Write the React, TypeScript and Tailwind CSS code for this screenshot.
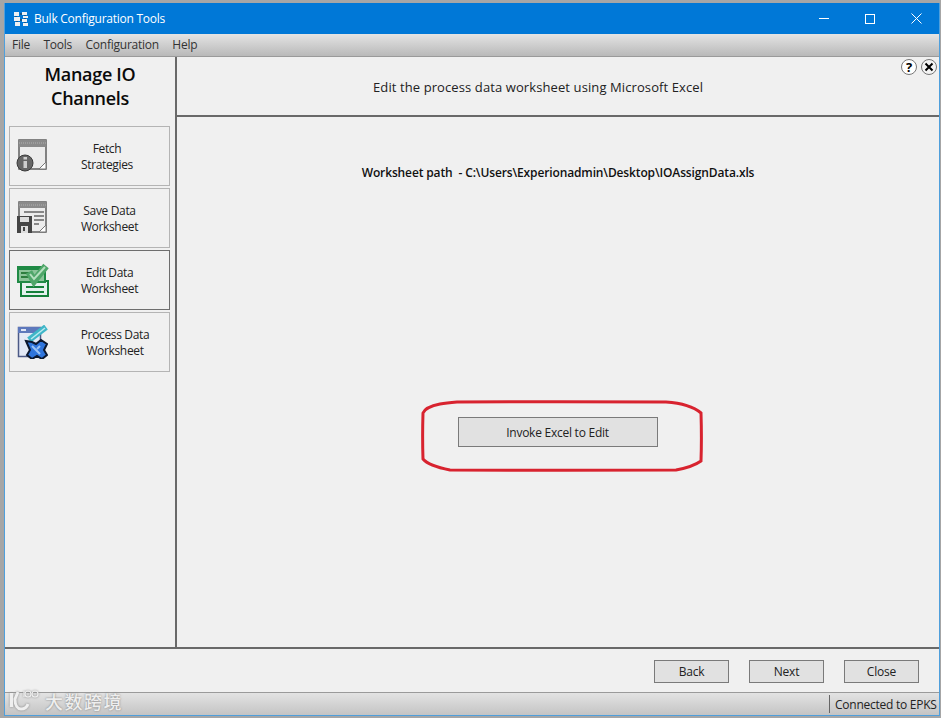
const font = { fontFamily: '"Open Sans", "Noto Sans", sans-serif' };

function FetchIcon() {
  return (
    <svg width="32" height="34" viewBox="0 0 32 34" className="shrink-0">
      <rect x="3" y="1" width="27" height="29" fill="#ececec" stroke="#5e5e5e" strokeWidth="1.5" />
      <rect x="3" y="1" width="27" height="7" fill="#8a8a8a" />
      <path d="M3 4h27" stroke="#b0b0b0" strokeWidth="1" strokeDasharray="1 1" />
      <path d="M23 30l7-7v7z" fill="#fff" stroke="#777" />
      <circle cx="9" cy="24" r="8" fill="#666" stroke="#3a3a3a" />
      <rect x="7.5" y="22" width="3.5" height="7" fill="#cfcfcf" />
      <rect x="7.5" y="18" width="3.5" height="2.5" fill="#cfcfcf" />
    </svg>
  );
}

function SaveIcon() {
  return (
    <svg width="32" height="34" viewBox="0 0 32 34" className="shrink-0">
      <rect x="3" y="1" width="27" height="30" fill="#ececec" stroke="#5e5e5e" strokeWidth="1.5" />
      <rect x="3" y="1" width="27" height="6" fill="#8a8a8a" />
      <path d="M3 4h27" stroke="#b0b0b0" strokeWidth="1" strokeDasharray="1 1" />
      <path d="M8 11h20M18 15h10M18 19h10M18 23h5" stroke="#666" strokeWidth="1.5" />
      <path d="M23 31l7-7v7z" fill="#fff" stroke="#777" />
      <rect x="1" y="15" width="15" height="17" fill="#444" />
      <rect x="4" y="16" width="9" height="5" fill="#ddd" />
      <rect x="5" y="25" width="7" height="7" fill="#ddd" />
      <rect x="7" y="26" width="2" height="4" fill="#444" />
    </svg>
  );
}

function EditIcon() {
  return (
    <svg width="33" height="34" viewBox="0 0 33 34" className="shrink-0 mr-[-1px]">
      <rect x="5" y="18" width="27" height="15" fill="#e4f1ee" stroke="#15803a" strokeWidth="2" />
      <path d="M10 24h18M10 29h18" stroke="#15803a" strokeWidth="2" />
      <rect x="1" y="3" width="29" height="17" fill="#1f8a45" />
      <rect x="3" y="7" width="25" height="11" fill="#8cc49a" />
      <path d="M5 10h8M5 14h8" stroke="#2e7d3f" strokeWidth="2" />
      <path d="M13 9l5 9L30 3" fill="none" stroke="#4fa669" strokeWidth="7" />
      <path d="M14 11l4 5L29 4" fill="none" stroke="#b5e0bf" strokeWidth="2" />
    </svg>
  );
}

function ProcessIcon() {
  return (
    <svg width="32" height="34" viewBox="0 0 32 34" className="shrink-0">
      <rect x="2.5" y="2.5" width="22" height="29" fill="#e3e9f6" stroke="#4c5a86" strokeWidth="1.5" />
      <rect x="2" y="2" width="23" height="6" fill="#5d78bc" />
      <rect x="5" y="4" width="5" height="2" fill="#dfe6f5" />
      <path d="M13 15L30 2" stroke="#3fb6c8" strokeWidth="6" />
      <path d="M15 14L29 3" stroke="#bdeaf0" strokeWidth="1.5" />
      <path d="M10 16l6 1 4 2 5-4 6 4-3 6 3 5-5 4-5-3-5 3-5-4 3-5z" fill="#2f75dc" stroke="#0b1830" strokeWidth="2" />
      <path d="M16 21l8 8M24 21l-3 3" stroke="#9cc4f5" strokeWidth="2" />
    </svg>
  );
}

function SideButton({ icon, lines, active, textClass }: { icon: React.ReactNode; lines: string[]; active?: boolean; textClass: string }) {
  return (
    <div className={`flex items-center pl-[6px] w-[161px] h-[60px] border ${active ? "border-[#6e6e6e]" : "border-[#b4b4b4]"} bg-[#f0f0f0]`}>
      {icon}
      <div className={`pt-[2px] text-[12px] leading-[16px] text-center text-[#222] tracking-[-0.35px] whitespace-nowrap ${textClass}`}>
        {lines.map((l) => <div key={l}>{l}</div>)}
      </div>
    </div>
  );
}

function BottomButton({ label, className }: { label: string; className?: string }) {
  return (
    <div className={`w-[75px] h-[23px] border border-[#7a7a7a] bg-[#e1e1e1] flex items-center justify-center pt-[1px] text-[12px] tracking-[-0.2px] text-[#222] ${className ?? ""}`}>{label}</div>
  );
}

export default function App() {
  return (
    <div style={font} className="relative w-[941px] h-[718px] bg-[#a6a6a6] pt-[3px] pl-[4px] pr-[1px] pb-[2px] overflow-hidden">
      <div className="w-full h-full flex flex-col border-x border-b border-[#4f9fdc] bg-[#f0f0f0]">
        <div className="h-[31px] shrink-0 bg-[#0078d7] flex items-center text-white">
          <svg width="16" height="16" viewBox="0 0 16 16" className="ml-[8px] mr-[5px]">
            <path d="M1 1h5v4H1zM1 6h6v4H1zM2 11h5v4H2zM9 1h5v3H9zM10 5h5v2h-5zM9 8h5v3H9zM10 12h5v3h-5z" fill="#eef1f3" />
            <path d="M3 5v1M4 10v1M7 3h2M7 9h2M12 4v1M12 7v1M12 11v1" stroke="#2b3640" strokeWidth="1" />
          </svg>
          <span className="text-[12px] tracking-[-0.25px]">Bulk Configuration Tools</span>
          <div className="ml-auto flex items-center">
            <div className="w-[46px] flex justify-center"><div className="w-[10px] h-px bg-white" /></div>
            <div className="w-[46px] flex justify-center"><div className="w-[10px] h-[10px] border border-white" /></div>
            <div className="w-[46px] flex justify-center">
              <svg width="11" height="11" viewBox="0 0 11 11"><path d="M.5.5l10 10M10.5.5l-10 10" stroke="#fff" /></svg>
            </div>
          </div>
        </div>
        <div className="h-[23px] shrink-0 bg-gradient-to-b from-[#e4e4e4] to-[#b9b9b9] border-b border-[#9a9a9a] flex items-center gap-[13.5px] pl-[7px] text-[12px] text-[#333] tracking-[-0.25px]">
          <span>File</span><span>Tools</span><span>Configuration</span><span>Help</span>
        </div>
        <div className="flex-1 flex min-h-0">
          <div className="w-[172px] shrink-0 border-r-2 border-[#696969] flex flex-col">
            <div className="h-[69px] shrink-0 pt-[5px] text-center text-[18px] leading-[24px] font-semibold text-[#0a0a0a] tracking-[-0.3px]">
              <div>Manage IO</div>
              <div>Channels</div>
            </div>
            <div className="flex flex-col gap-[2px] pl-[4px]">
              <SideButton icon={<FetchIcon />} lines={["Fetch", "Strategies"]} textClass="ml-[26px] w-[66px]" />
              <SideButton icon={<SaveIcon />} lines={["Save Data", "Worksheet"]} textClass="ml-[26px] w-[71px]" />
              <SideButton icon={<EditIcon />} lines={["Edit Data", "Worksheet"]} active textClass="ml-[26px] w-[71px]" />
              <SideButton icon={<ProcessIcon />} lines={["Process Data", "Worksheet"]} textClass="ml-[26px] w-[82px]" />
            </div>
          </div>
          <div className="flex-1 flex flex-col min-w-0">
            <div className="h-[60px] shrink-0 border-b-2 border-[#696969] flex items-center pl-[196px] pt-[4px] text-[13px] text-[#222] tracking-[0.1px]">
              Edit the process data worksheet using Microsoft Excel
            </div>
            <div className="flex-1 flex flex-col items-center">
              <div className="mt-[47px] text-[12px] font-semibold text-[#111] tracking-[-0.13px] whitespace-pre">Worksheet path  - C:\Users\Experionadmin\Desktop\IOAssignData.xls</div>
              <div className="mt-[235px] ml-[-1px] w-[200px] h-[30px] border border-[#7a7a7a] bg-[#e1e1e1] flex items-center justify-center pt-[2px] text-[12px] text-[#222] tracking-[-0.25px]">Invoke Excel to Edit</div>
            </div>
          </div>
        </div>
        <div className="h-[45px] shrink-0 border-t-2 border-[#696969] flex items-center justify-end pr-[20px] gap-[20px] pt-[1px]">
          <BottomButton label="Back" />
          <BottomButton label="Next" className="mr-[-5px]" />
          <BottomButton label="Close" className="ml-[5px]" />
        </div>
        <div className="h-[23px] shrink-0 bg-gradient-to-b from-[#e3e3e3] to-[#c4c4c4] border-t border-[#9a9a9a] flex items-center justify-end">
          <div className="h-[18px] border-l border-[#666] pl-[5px] pr-[3px] pt-[1px] w-[110px] text-[12px] leading-[18px] text-[#222] tracking-[-0.25px] whitespace-nowrap">Connected to EPKS</div>
        </div>
      </div>

      {/* help / close overlays */}
      <div className="absolute left-[901px] top-[59px] w-[16px] h-[16px] rounded-full border border-[#777] bg-white flex items-center justify-center text-[13px] font-bold leading-none text-black">?</div>
      <div className="absolute left-[921px] top-[59px] w-[16px] h-[16px] rounded-full border border-[#777] bg-[#f4f4f4] flex items-center justify-center">
        <svg width="10" height="10" viewBox="0 0 10 10"><path d="M1.5 1.5l7 7M8.5 1.5l-7 7" stroke="#000" strokeWidth="2" /></svg>
      </div>

      {/* red annotation */}
      <svg className="absolute left-[420px] top-[399px]" width="285" height="75" viewBox="0 0 285 75" fill="none">
        <path d="M37 3C90 2.5 200 2.5 246 3C261 4 274 8 281 14C281.5 30 281.5 48 281 62C274 67 267 69 256 71C200 71.5 90 71.5 30 71C20 69 8 66 3 60C2.5 45 2.5 30 3 14C5 9 15 6 20 5C25 4 30 3.5 37 3Z" stroke="#d8232f" strokeWidth="3" />
      </svg>

      {/* watermark */}
      <div className="absolute left-[9px] top-[688px] flex items-center gap-[3px]">
        <svg width="33" height="25" viewBox="0 0 33 25" fill="none" stroke="#efefef" className="[filter:drop-shadow(0_0_1px_#888)]">
          <path d="M2.5 5v14" strokeWidth="3.5" />
          <path d="M9 4L6 11C6 18 9 21 12 21C15 21 18 19 19 16" strokeWidth="3" />
          <path d="M15 3v6" strokeWidth="1.2" />
          <circle cx="19" cy="6" r="3" strokeWidth="1.2" />
          <circle cx="26" cy="6" r="3" strokeWidth="1.2" />
        </svg>
        <span className="text-[18px] leading-none font-medium tracking-[1.5px] text-[#eeeeee] [text-shadow:0_0_2px_#777]" style={{ fontFamily: '"Noto Sans CJK SC", sans-serif' }}>大数跨境</span>
      </div>
    </div>
  );
}
